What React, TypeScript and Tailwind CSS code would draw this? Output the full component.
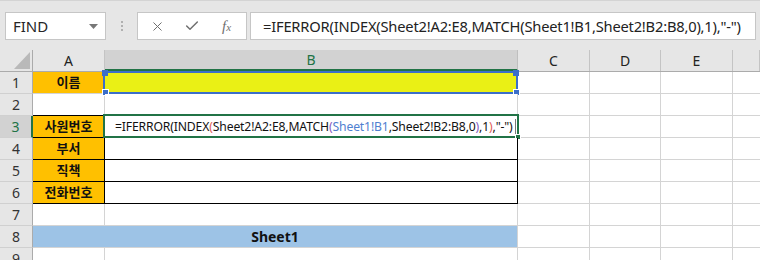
import { Check, X } from 'lucide-react'

const ui = { fontFamily: '"Noto Sans", "Noto Sans CJK KR", sans-serif' }
const cellFont = { fontFamily: '"Noto Sans", "Noto Sans CJK KR", sans-serif' }

const cols = [
  { key: 'A', w: 'w-[72px]' },
  { key: 'B', w: 'w-[413px]' },
  { key: 'C', w: 'w-[72px]' },
  { key: 'D', w: 'w-[71px]' },
  { key: 'E', w: 'w-[72px]' },
  { key: 'F', w: 'flex-1' },
]

const labels: Record<number, string> = { 1: '이름', 3: '사원번호', 4: '부서', 5: '직책', 6: '전화번호' }

function FormulaText() {
  return (
    <>
      =IFERROR(INDEX<span className="text-[#e0605a]">(</span>Sheet2!A2:E8,MATCH
      <span className="text-[#8a5cc0]">(</span>
      <span className="text-[#4f7fd0]">Sheet1!B1</span>,Sheet2!B2:B8,0
      <span className="text-[#8a5cc0]">)</span>,1<span className="text-[#e0605a]">)</span>,"-")
    </>
  )
}

function Toolbar() {
  return (
    <div className="flex h-[50px] items-start border-t border-[#d4d4d4] bg-[#e6e6e6] pt-[11px]" style={ui}>
      <div className="ml-[5px] flex h-[28px] w-[101px] items-center justify-between border border-[#c6c6c6] bg-white pl-[7px] pr-[7px]">
        <span className="text-[15px] text-[#262626]">FIND</span>
        <svg width="9" height="5" viewBox="0 0 9 5"><path d="M0 0h9L4.5 5z" fill="#777" /></svg>
      </div>
      <div className="ml-[15px] mt-[9px] flex flex-col gap-[2px]">
        <span className="h-[2px] w-[2px] bg-[#b0b0b0]" />
        <span className="h-[2px] w-[2px] bg-[#b0b0b0]" />
        <span className="h-[2px] w-[2px] bg-[#b0b0b0]" />
      </div>
      <div className="ml-[14px] flex h-[28px] w-[110px] items-center border border-[#c6c6c6] bg-white text-[#6f6f6f]">
        <X size={15} strokeWidth={1.6} className="ml-[12px]" />
        <Check size={16} strokeWidth={2.2} className="ml-[19px]" />
        <span className="ml-[22px] text-[15px] italic" style={{ fontFamily: '"Liberation Serif", serif' }}>
          f<span className="text-[11px]">x</span>
        </span>
      </div>
      <div className="ml-[3px] flex h-[28px] w-[506px] items-center border border-[#c6c6c6] bg-white pl-[12px]">
        <span className="whitespace-nowrap text-[14.7px] tracking-[-0.2px] text-[#222]">
          =IFERROR(INDEX(Sheet2!A2:E8,MATCH(Sheet1!B1,Sheet2!B2:B8,0),1),"-")
        </span>
      </div>
    </div>
  )
}

function HeaderRow() {
  return (
    <div className="flex h-[22px] border-b border-[#ababab] bg-[#e6e6e6]" style={ui}>
      <div className="flex h-full w-[33px] shrink-0 items-end justify-end border-r border-[#ababab] pb-[2px] pr-[2px]">
        <svg width="16" height="17" viewBox="0 0 16 17"><path d="M16 0v17H0z" fill="#b9b9b9" /></svg>
      </div>
      {cols.map((c) =>
        c.key === 'B' ? (
          <div
            key={c.key}
            className={`${c.w} flex shrink-0 items-center justify-center border-r border-b-2 border-r-[#bfbfbf] border-b-[#217346] bg-[#d2d2d2] text-[14px] text-[#217346]`}
          >
            B
          </div>
        ) : (
          <div
            key={c.key}
            className={`${c.w} flex shrink-0 items-center justify-center border-r border-[#c4c4c4] text-[14px] text-[#222]`}
          >
            {c.key !== 'F' ? c.key : ''}
          </div>
        )
      )}
    </div>
  )
}

function Row({ n }: { n: number }) {
  const boxed = n >= 3 && n <= 6
  const aFill = labels[n] ? 'bg-[#ffc000]' : 'bg-white'
  const aBorder = boxed ? 'border-black' : n === 2 ? 'border-r-[#d4d4d4] border-b-black' : 'border-[#d4d4d4]'
  const bBorder = boxed ? 'border-black' : n === 2 ? 'border-r-[#d4d4d4] border-b-black' : 'border-[#d4d4d4]'
  const sel = n === 3

  return (
    <div className="flex h-[22px]" style={cellFont}>
      <div
        className={`flex w-[33px] shrink-0 items-center justify-center border-b border-[#d0d0d0] text-[14px] ${
          sel ? 'border-r-2 border-r-[#217346] bg-[#d2d2d2] text-[#217346]' : 'border-r border-r-[#ababab] bg-[#e6e6e6] text-[#333]'
        }`}
        style={ui}
      >
        {n}
      </div>

      {n === 8 ? (
        <div className="flex w-[485px] shrink-0 items-center justify-center border-b border-r border-[#d4d4d4] bg-[#9dc3e6] text-[14px] font-bold text-[#111]">
          Sheet1
        </div>
      ) : (
        <>
          <div
            className={`flex w-[72px] shrink-0 items-center justify-center border-b border-r ${aBorder} ${aFill} text-[13px] font-bold text-[#111]`}
          >
            {labels[n] ?? ''}
          </div>
          <div
            className={`relative flex w-[413px] shrink-0 items-center border-b border-r ${bBorder} ${
              n === 1 ? 'bg-[#eaf015]' : 'bg-white'
            }`}
          >
            {n === 1 && (
              <div className="absolute -left-[2px] -top-[1px] -right-[1px] -bottom-[1px] border-2 border-[#3c6fc9]">
                <span className="absolute -left-[3px] -top-[3px] h-[6px] w-[6px] bg-[#3c6fc9]" />
                <span className="absolute -right-[3px] -top-[3px] h-[6px] w-[6px] bg-[#3c6fc9]" />
                <span className="absolute -bottom-[4px] -left-[3px] h-[7px] w-[7px] border border-white bg-[#3c6fc9]" />
                <span className="absolute -bottom-[4px] -right-[4px] h-[7px] w-[7px] border border-white bg-[#3c6fc9]" />
              </div>
            )}
            {sel && (
              <>
                <div className="absolute -left-[2px] -top-[2px] -right-[2px] -bottom-[1px] border-2 border-[#217346]">
                  <span className="absolute -bottom-[4px] -right-[4px] h-[6px] w-[6px] border border-white bg-[#217346]" />
                </div>
                <span className="relative whitespace-nowrap pl-[10px] text-[12.2px] tracking-[-0.15px] text-[#111]">
                  <FormulaText />
                  <span className="ml-[2px] inline-block h-[15px] w-px translate-y-[3px] bg-[#777]" />
                </span>
              </>
            )}
          </div>
        </>
      )}

      <div className="w-[72px] shrink-0 border-b border-r border-[#d4d4d4] bg-white" />
      <div className="w-[71px] shrink-0 border-b border-r border-[#d4d4d4] bg-white" />
      <div className="w-[72px] shrink-0 border-b border-r border-[#d4d4d4] bg-white" />
      <div className="flex-1 border-b border-[#d4d4d4] bg-white" />
    </div>
  )
}

export default function App() {
  return (
    <div className="h-[260px] w-[760px] overflow-hidden bg-white">
      <Toolbar />
      <HeaderRow />
      {[1, 2, 3, 4, 5, 6, 7, 8, 9].map((n) => (
        <Row key={n} n={n} />
      ))}
    </div>
  )
}
